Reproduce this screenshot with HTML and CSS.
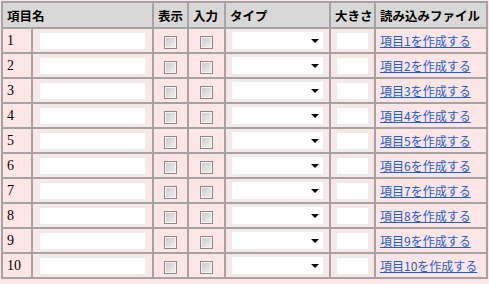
FILE: index.html
```html
<!DOCTYPE html>
<html lang="ja">
<head>
  <meta charset="UTF-8" />
  <title>項目設定</title>
  <link rel="stylesheet" href="styles.css">
</head>
<body>
  <table class="item-table">
    <colgroup>
      <col class="col-num">
      <col class="col-name">
      <col class="col-show">
      <col class="col-input">
      <col class="col-type">
      <col class="col-size">
      <col class="col-file">
    </colgroup>
    <thead>
      <tr>
        <th colspan="2">項目名</th>
        <th>表示</th>
        <th>入力</th>
        <th>タイプ</th>
        <th>大きさ</th>
        <th>読み込みファイル</th>
      </tr>
    </thead>
    <tbody>
      <tr><td class="num">1</td><td><input type="text" class="name-box"></td><td class="center"><input type="checkbox"></td><td class="center"><input type="checkbox"></td><td><span class="select-wrap"><select class="type-select"><option></option></select></span></td><td><input type="text" class="size-box"></td><td><a href="#">項目1を作成する</a></td></tr>
      <tr><td class="num">2</td><td><input type="text" class="name-box"></td><td class="center"><input type="checkbox"></td><td class="center"><input type="checkbox"></td><td><span class="select-wrap"><select class="type-select"><option></option></select></span></td><td><input type="text" class="size-box"></td><td><a href="#">項目2を作成する</a></td></tr>
      <tr><td class="num">3</td><td><input type="text" class="name-box"></td><td class="center"><input type="checkbox"></td><td class="center"><input type="checkbox"></td><td><span class="select-wrap"><select class="type-select"><option></option></select></span></td><td><input type="text" class="size-box"></td><td><a href="#">項目3を作成する</a></td></tr>
      <tr><td class="num">4</td><td><input type="text" class="name-box"></td><td class="center"><input type="checkbox"></td><td class="center"><input type="checkbox"></td><td><span class="select-wrap"><select class="type-select"><option></option></select></span></td><td><input type="text" class="size-box"></td><td><a href="#">項目4を作成する</a></td></tr>
      <tr><td class="num">5</td><td><input type="text" class="name-box"></td><td class="center"><input type="checkbox"></td><td class="center"><input type="checkbox"></td><td><span class="select-wrap"><select class="type-select"><option></option></select></span></td><td><input type="text" class="size-box"></td><td><a href="#">項目5を作成する</a></td></tr>
      <tr><td class="num">6</td><td><input type="text" class="name-box"></td><td class="center"><input type="checkbox"></td><td class="center"><input type="checkbox"></td><td><span class="select-wrap"><select class="type-select"><option></option></select></span></td><td><input type="text" class="size-box"></td><td><a href="#">項目6を作成する</a></td></tr>
      <tr><td class="num">7</td><td><input type="text" class="name-box"></td><td class="center"><input type="checkbox"></td><td class="center"><input type="checkbox"></td><td><span class="select-wrap"><select class="type-select"><option></option></select></span></td><td><input type="text" class="size-box"></td><td><a href="#">項目7を作成する</a></td></tr>
      <tr><td class="num">8</td><td><input type="text" class="name-box"></td><td class="center"><input type="checkbox"></td><td class="center"><input type="checkbox"></td><td><span class="select-wrap"><select class="type-select"><option></option></select></span></td><td><input type="text" class="size-box"></td><td><a href="#">項目8を作成する</a></td></tr>
      <tr><td class="num">9</td><td><input type="text" class="name-box"></td><td class="center"><input type="checkbox"></td><td class="center"><input type="checkbox"></td><td><span class="select-wrap"><select class="type-select"><option></option></select></span></td><td><input type="text" class="size-box"></td><td><a href="#">項目9を作成する</a></td></tr>
      <tr><td class="num">10</td><td><input type="text" class="name-box"></td><td class="center"><input type="checkbox"></td><td class="center"><input type="checkbox"></td><td><span class="select-wrap"><select class="type-select"><option></option></select></span></td><td><input type="text" class="size-box"></td><td><a href="#">項目10を作成する</a></td></tr>
    </tbody>
  </table>
</body>
</html>
```

FILE: styles.css
```css
* {
  box-sizing: border-box;
}

body {
  margin: 0;
  padding: 1px;
  background: #ffe6e6;
  font-family: "Noto Sans CJK JP", sans-serif;
  font-size: 12px;
  color: #000;
}

.item-table {
  width: 487px;
  border-collapse: collapse;
  table-layout: fixed;
  border: 2px solid #a0a0a0;
}

.item-table th,
.item-table td {
  border: 2px solid #a4a4a4;
  padding: 0 4px;
  height: 25px;
  text-align: left;
  vertical-align: middle;
}

.item-table th {
  background: #d8d8d8;
  font-weight: bold;
  font-size: 12.5px;
  height: 26px;
  white-space: nowrap;
  overflow: hidden;
}

.item-table td {
  background: #ffe6e6;
}

.col-num { width: 30px; }
.col-name { width: 121px; }
.col-show { width: 35px; }
.col-input { width: 37px; }
.col-type { width: 105px; }
.col-size { width: 45px; }

.num {
  font-family: "Liberation Serif", serif;
  font-size: 14px;
}

.item-table .center {
  text-align: center;
}

.name-box {
  width: 109px;
  height: 20px;
  border: 2px solid #ececec;
  background: #fff;
  margin: 0 0 0 1px;
  display: block;
}

.size-box {
  width: 35px;
  height: 20px;
  border: 2px solid #ececec;
  background: #fff;
  display: block;
}

.select-wrap {
  position: relative;
  display: block;
  width: 95px;
}

.select-wrap::after {
  content: '';
  position: absolute;
  right: 6px;
  top: 9px;
  border-left: 4px solid transparent;
  border-right: 4px solid transparent;
  border-top: 4px solid #000;
  pointer-events: none;
}

.type-select {
  appearance: none;
  -webkit-appearance: none;
  width: 95px;
  height: 21px;
  border: 2px solid #ececec;
  border-radius: 0;
  background: #fff;
  display: block;
}

input[type="checkbox"] {
  appearance: none;
  -webkit-appearance: none;
  width: 13px;
  height: 13px;
  margin: 0;
  vertical-align: middle;
  border: 1px solid #8a8a8a;
  background: linear-gradient(135deg, #c9c9c9, #f2f2f2);
  box-shadow: inset 0 0 0 1px #f4f4f4;
}

a {
  color: #1a5fd6;
  text-decoration: underline;
  white-space: nowrap;
}
```
